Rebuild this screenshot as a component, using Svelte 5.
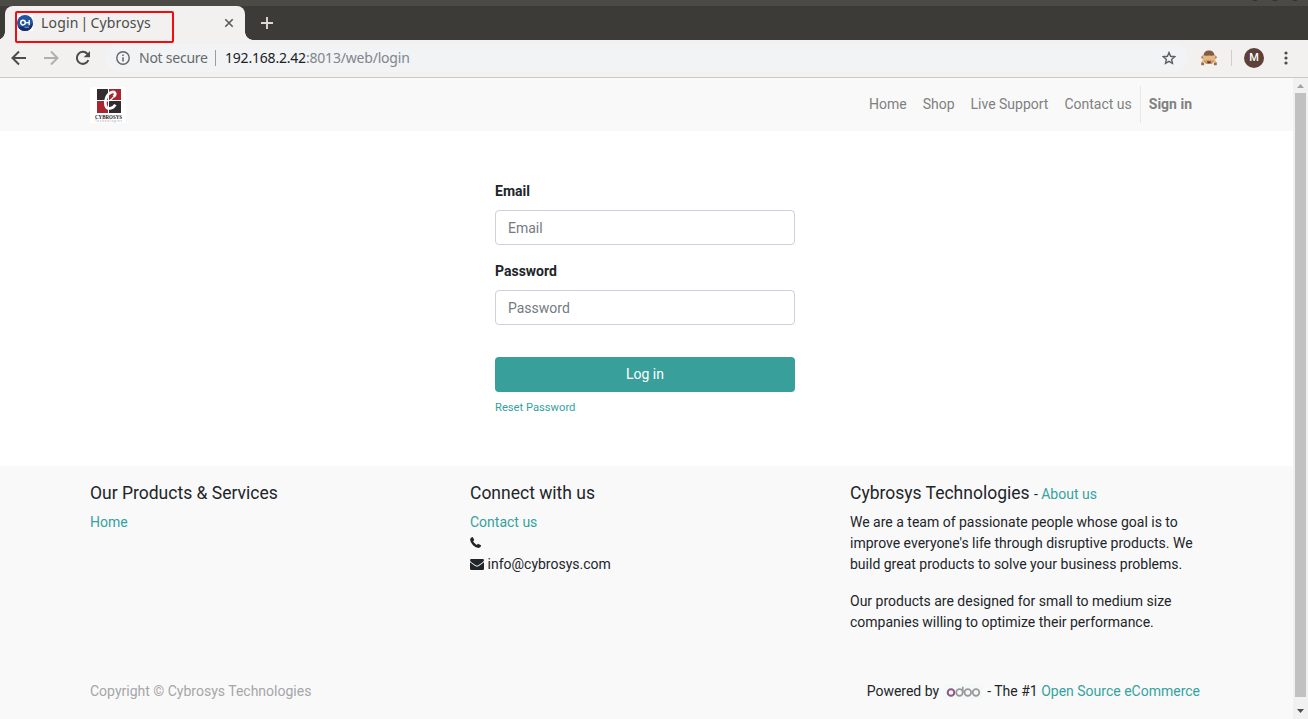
<script>
  const links = ['Home', 'Shop', 'Live Support', 'Contact us'];
</script>

<div class="window">
  <header class="chrome">
    <div class="titlebar">
      <i class="dot"></i><i class="dot"></i><i class="dot"></i>
    </div>
    <div class="tabs">
      <div class="tab">
        <svg class="favicon" width="16" height="16" viewBox="0 0 16 16">
          <rect width="16" height="16" fill="#fff" />
          <circle cx="8" cy="8" r="8" fill="#1f54a6" />
          <path d="M.8 11.5a8 8 0 0 0 14.4 0L16 8Q11 13 .8 11.5z" fill="#14306c" />
          <circle cx="6" cy="7.6" r="2.3" fill="none" stroke="#fff" stroke-width="1.5" />
          <path d="M9.9 6.9v1.5M12.2 4.9v5.3M9.2 7.700h3" fill="none" stroke="#fff" stroke-width="1.3" />
          <path d="M7.5 12.2h4.5" stroke="#c5cfe2" stroke-width=".8" />
        </svg>
        <span class="tab-title">Login | Cybrosys</span>
        <svg class="close" width="10" height="10" viewBox="0 0 10 10"><path d="M1.3 1.3l7.4 7.4M8.7 1.3L1.3 8.7" stroke="#5a5a58" stroke-width="1.6" /></svg>
        <div class="marker"></div>
      </div>
      <svg class="plus" width="12" height="12" viewBox="0 0 12 12"><path d="M6 0v12M0 6h12" stroke="#dfdbd2" stroke-width="1.9" /></svg>
    </div>
    <div class="toolbar">
      <svg class="nav-icon back" width="16" height="16" viewBox="0 0 16 16"><path d="M15 8H2M8 1.5L1.5 8 8 14.5" fill="none" stroke="#4c4c4a" stroke-width="2" /></svg>
      <svg class="nav-icon forward" width="16" height="16" viewBox="0 0 16 16"><path d="M1 8h13M8 1.5L14.5 8 8 14.5" fill="none" stroke="#b0afac" stroke-width="2" /></svg>
      <svg class="nav-icon reload" width="16" height="16" viewBox="0 0 16 16"><path d="M13.4 10.2A6 6 0 1 1 12.3 3.8L14 5.5" fill="none" stroke="#4c4c4a" stroke-width="2" /><path d="M15 .9v6.3H8.7z" fill="#4c4c4a" /></svg>
      <div class="omnibox">
        <svg class="info" width="14" height="14" viewBox="0 0 14 14"><circle cx="7" cy="7" r="6.2" fill="none" stroke="#606468" stroke-width="1.4" /><path d="M7 6.2v4.3M7 3.4v1.5" stroke="#606468" stroke-width="1.5" /></svg>
        <span class="secure">Not secure</span>
        <i class="bar"></i>
        <span class="url"><b>192.168.2.42</b>:8013/web/login</span>
        <svg class="star" width="14" height="14" viewBox="0 0 14 14"><path d="M7 1.5l1.6 3.8 4.1.4-3.1 2.7.9 4L7 10.3l-3.5 2.1.9-4L1.3 5.7l4.1-.4z" fill="none" stroke="#5b6065" stroke-width="1.4" /></svg>
      </div>
      <svg class="monkey" width="16" height="16" viewBox="0 0 16 16">
        <circle cx="2" cy="7.3" r="1.8" fill="#b98b68" /><circle cx="14" cy="7.3" r="1.8" fill="#b98b68" />
        <path d="M8 .6c4 0 6 2.7 5.6 7.3C13.2 12.5 11.2 14 8 14s-5.2-1.5-5.6-6.1C2 3.3 4 .6 8 .6z" fill="#805c49" />
        <ellipse cx="8" cy="10.7" rx="4.2" ry="3.2" fill="#d2a06d" />
        <path d="M5.8 11.2h4.4Q9.8 13.4 8 13.4t-2.2-2.2z" fill="#6b3430" />
        <path d="M.4 15c0-2 .4-4 1.8-6.3L1.6 5.1q2.6.8 6.5.4v4q-2.7.8-4.2.3-.8 2.6-.6 5.2z" fill="#e6ba80" />
        <path d="M15.6 15c0-2-.4-4-1.8-6.3l.6-3.6q-2.6.8-6.5.4v4q2.7.8 4.2.3.8 2.6.6 5.2z" fill="#e6ba80" />
        <path d="M.3 12.2l2.7.7v2.4H.3zM15.7 12.2l-2.7.7v2.4h2.7z" fill="#936e5a" />
      </svg>
      <i class="bar light"></i>
      <span class="avatar">M</span>
      <svg class="menu" width="4" height="14" viewBox="0 0 4 14" fill="#4c4c4a"><circle cx="2" cy="2" r="1.6" /><circle cx="2" cy="7" r="1.6" /><circle cx="2" cy="12" r="1.6" /></svg>
    </div>
  </header>

  <div class="viewport">
    <div class="page">
      <nav>
        <svg class="brand" width="36" height="36" viewBox="0 0 36 36">
          <rect width="36" height="36" fill="#fff" />
          <path d="M7 2h11v11H7zM19 14h12v12H19z" fill="#302c2f" />
          <path d="M19 2h12v11H19zM7 14h11v12H7z" fill="#a7262f" />
          <path d="M23.5 9.8c3.2-2.7 1.6-5.6-2-4.6-4.8 1.4-7 9-5.9 13.1 1.2 4.7 7.3 3.9 9.7-.6" fill="none" stroke="#fff" stroke-width="2.7" />
          <path d="M14.5 13.5c3 1.1 6.5-.2 9-3.7" fill="none" stroke="#fff" stroke-width="1.2" />
          <text x="5" y="31.7" textLength="27" lengthAdjust="spacingAndGlyphs" font-family="Liberation Serif, serif" font-weight="700" font-size="5.2" fill="#222">CYBROSYS</text>
          <text x="5" y="35.3" textLength="27" font-family="Liberation Sans, sans-serif" font-size="3" fill="#999">Technologies</text>
        </svg>
        <div class="links">
          {#each links as link}<a href="#top">{link}</a>{/each}
          <a class="signin" href="#login">Sign in</a>
        </div>
      </nav>

      <main>
        <form onsubmit={(e) => e.preventDefault()}>
          <label for="email">Email</label>
          <input id="email" type="text" placeholder="Email" />
          <label for="password">Password</label>
          <input id="password" type="password" placeholder="Password" />
          <button>Log in</button>
          <a class="reset" href="#reset">Reset Password</a>
        </form>
      </main>

      <footer>
        <div class="columns">
          <section>
            <h4>Our Products &amp; Services</h4>
            <a href="#home">Home</a>
          </section>
          <section>
            <h4>Connect with us</h4>
            <div><a href="#contact">Contact us</a></div>
            <div class="line phone"><svg width="11" height="11" viewBox="0 0 11 11"><path d="M2.7.1L4.3 3 3.1 4.2Q4.4 6.7 6.8 7.9L8 6.7l3 1.6q.1 2.4-2.6 2.6Q5.8 10.9 3 8.2.1 5.4.1 2.6.3.3 2.7.1z" fill="#212529" /></svg></div>
            <div class="line"><svg width="14" height="11" viewBox="0 0 14 11"><path d="M1.2 0h11.6Q14 0 14 1.2 14 2.3 12.3 3.5L8.3 6.3Q7 7.1 5.7 6.3L1.6 3.5Q0 2.3 0 1.2 0 0 1.2 0zM0 3.3L5.2 7Q7 8.2 8.8 7L14 3.3v6.5Q14 11 12.8 11H1.2Q0 11 0 9.8z" fill="#212529" /></svg><span>info@cybrosys.com</span></div>
          </section>
          <section>
            <h4>Cybrosys Technologies <small>- <a href="#about">About us</a></small></h4>
            <p>We are a team of passionate people whose goal is to improve everyone's life through disruptive products. We build great products to solve your business problems.</p>
            <p>Our products are designed for small to medium size companies willing to optimize their performance.</p>
          </section>
        </div>
        <div class="bottom">
          <span class="copyright">Copyright © Cybrosys Technologies</span>
          <span class="powered">Powered by
            <svg width="40" height="15" viewBox="0 0 40 15" fill="none" stroke="#999" stroke-width="1.7"><rect width="40" height="15" fill="#f4f8f9" stroke="none" /><circle cx="8" cy="8.5" r="3.3" stroke="#925683" stroke-width="2" /><circle cx="16.5" cy="8.5" r="3.3" /><path d="M19.8 2.8v6" /><circle cx="24.8" cy="8.5" r="3.3" /><circle cx="33" cy="8.5" r="3.3" /></svg>
            <span>- The #1 <a href="#shop">Open Source eCommerce</a></span>
          </span>
        </div>
      </footer>
    </div>
    <div class="scrollbar">
      <svg width="15" height="15" viewBox="0 0 15 15"><path d="M4 10l3.5-4L11 10z" fill="#a3a3a3" /></svg>
      <i class="thumb"></i>
      <svg width="15" height="15" viewBox="0 0 15 15"><path d="M4 5l3.5 4L11 5z" fill="#505050" /></svg>
    </div>
  </div>
</div>

<style>
  :global(body) { margin: 0; overflow: hidden; }
  .window { width: 1308px; height: 719px; display: flex; flex-direction: column; overflow: hidden; font: 14px/21px Roboto, sans-serif; color: #212529; }
  .window * { box-sizing: border-box; }
  svg { display: block; flex: none; }
  a { color: #35a29f; text-decoration: none; }

  .chrome { height: 78px; flex: none; background: #f2f1ef; border-bottom: 1px solid #c9c9c9; font-family: "Noto Sans", sans-serif; }
  .titlebar { height: 6px; background: #4b4a44; display: flex; justify-content: flex-end; gap: 12px; padding-right: 9px; overflow: hidden; }
  .dot { width: 8px; height: 8px; margin-top: -7px; border-radius: 50%; background: #33322e; }
  .tabs { height: 34px; background: #3c3b37; display: flex; align-items: center; padding-left: 5px; }
  .tab { position: relative; width: 240px; height: 34px; background: #f2f1ef; border-radius: 8px 8px 0 0; display: flex; align-items: center; padding: 0 11px 0 12px; }
  .tab::before, .tab::after { content: ""; position: absolute; bottom: 0; width: 8px; height: 8px; }
  .tab::before { left: -8px; background: radial-gradient(circle at 0 0, #3c3b37 7.5px, #f2f1ef 8px); }
  .tab::after { right: -8px; background: radial-gradient(circle at 100% 0, #3c3b37 7.5px, #f2f1ef 8px); }
  .tab-title { margin-left: 8px; padding-bottom: 2px; font-size: 14px; letter-spacing: .17px; word-spacing: -1.8px; color: #4c4c4a; white-space: nowrap; }
  .close { margin-left: auto; }
  .marker { position: absolute; left: 10px; top: 5px; width: 159px; height: 32px; border: 2px solid #f30b10; border-radius: 2px; z-index: 1; }
  .plus { margin-left: 16px; }
  .toolbar { height: 36px; display: flex; align-items: center; }
  .back { margin-left: 11px; }
  .forward, .reload { margin-left: 16px; }
  .omnibox { width: 1083px; height: 28px; margin-left: 14px; border-radius: 14px; background: #f1f3f4; display: flex; align-items: center; padding: 0 12px 0 11px; }
  .secure { margin-left: 9px; padding-bottom: 1px; width: 70px; font-size: 14px; letter-spacing: -.25px; color: #666a6e; white-space: nowrap; }
  .bar { width: 1px; height: 16px; margin-left: 6px; background: #999da1; }
  .url { margin-left: 9px; padding-bottom: 1px; font-size: 14px; letter-spacing: -.2px; color: #80868b; white-space: nowrap; }
  .url b { font-weight: 400; color: #202124; }
  .star { margin-left: auto; }
  .monkey { margin-left: 13px; }
  .light { margin-left: 14px; background: #cfcecc; }
  .avatar { width: 20px; height: 20px; margin-left: 12px; border-radius: 50%; background: #5d4037; color: #fff; font: 500 11px/20px Roboto, sans-serif; text-align: center; }
  .menu { margin-left: 20px; }

  .viewport { flex: 1; display: flex; min-height: 0; }
  .page { width: 1293px; display: flex; flex-direction: column; }
  nav { height: 53px; flex: none; background: #f9f9f9; display: flex; justify-content: space-between; align-items: center; padding: 0 93px 0 90px; }
  .links { display: flex; align-items: center; height: 37px; }
  .links a { color: #808080; padding: 0 8px; white-space: nowrap; }
  .links .signin { font-weight: 700; border-left: 1px solid #e5e8eb; line-height: 37px; }
  main { height: 335px; flex: none; background: #fff; padding: 50px 0 0 495px; }
  form { width: 300px; display: flex; flex-direction: column; }
  label { font-weight: 700; line-height: 21px; margin-bottom: 8px; }
  input { height: 35px; margin: 0 0 16px; border: 1px solid #cdd0db; border-radius: 4px; padding: 0 12px; font: inherit; background: #fff; outline: 0; }
  input::placeholder { color: #757b82; opacity: 1; }
  button { height: 35px; margin: 16px 0 7px; border: 0; border-radius: 4px; background: #389f9b; color: #fff; font: inherit; }
  .reset { font-size: 11.2px; line-height: 17px; }

  footer { flex: 1; background: #f9f9f9; padding: 17px 93px 0 90px; }
  .columns { display: grid; grid-template-columns: 380px 380px 350px; height: 198px; }
  h4 { margin: 0 0 8px; font-size: 17.5px; line-height: 21px; font-weight: 400; white-space: nowrap; }
  small { font-size: 14px; line-height: 1; }
  p { margin: 0 0 16px; }
  .line { display: flex; height: 21px; align-items: center; gap: 3.5px; }
  .phone { padding-bottom: 2px; }
  .bottom { display: flex; justify-content: space-between; }
  .copyright { color: #a4a6a8; }
  .powered { display: flex; align-items: center; gap: 4px; white-space: nowrap; }
  .scrollbar { width: 15px; background: #f1f1f1; display: flex; flex-direction: column; align-items: center; }
  .thumb { width: 11px; flex: 1; margin-bottom: 7px; background: #c1c1c1; }
</style>
